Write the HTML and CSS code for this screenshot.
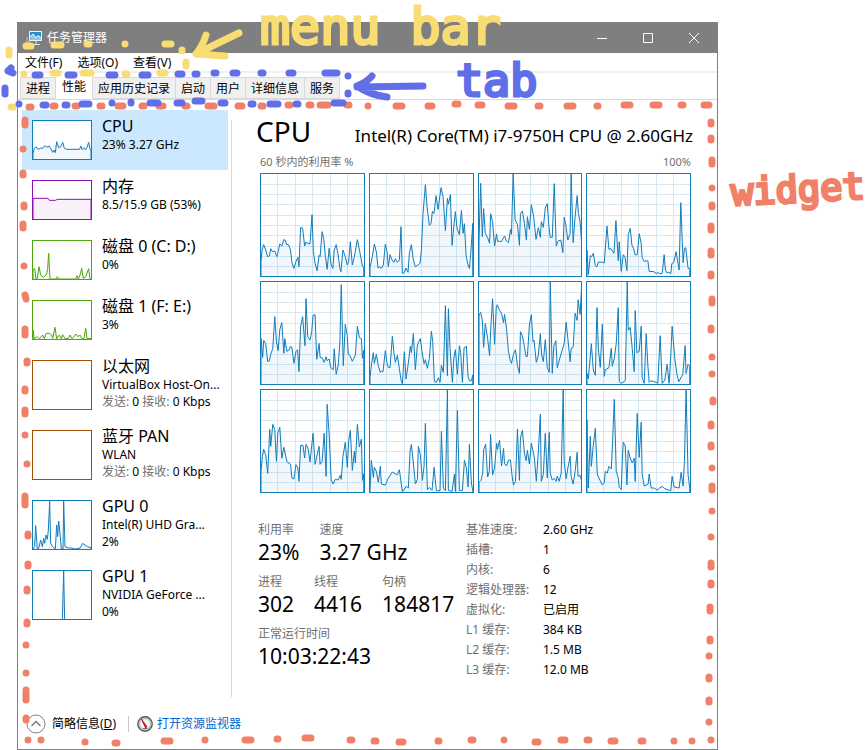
FILE: index.html
```html
<!DOCTYPE html>
<html lang="zh-CN">
<head>
<meta charset="utf-8">
<title>任务管理器</title>
<link rel="stylesheet" href="styles.css">
</head>
<body>
<div class="window">
  <header class="titlebar">
    <svg class="app-icon" viewBox="0 0 16 14"><path d="M1 6v7M3 10v3" stroke="#c8ccd0" stroke-width="1"/><rect x="3.500" y=".5" width="12" height="9" fill="#2a8fc4" stroke="#eef2f4"/><path d="M4.500 6l2.500-3 3 3.500 2-2 3 3V9H4.500z" fill="#8fcbe8"/><path d="M4 6l3-3 3 3.500 2-2 3 2.500" fill="none" stroke="#fff"/><path d="M6 13.500h8M10 10v3" stroke="#e4e7e9"/></svg>
    <span class="title">任务管理器</span>
    <button class="winbtn" aria-label="最小化"><svg viewBox="0 0 10 10"><path d="M0 5.500h10"/></svg></button>
    <button class="winbtn" aria-label="最大化"><svg viewBox="0 0 10 10"><path d="M.5.5h9v9h-9z"/></svg></button>
    <button class="winbtn" aria-label="关闭"><svg viewBox="0 0 10 10"><path d="M0 0l10 10M10 0L0 10"/></svg></button>
  </header>
  <nav class="menubar">
    <button>文件(F)</button><button>选项(O)</button><button>查看(V)</button>
  </nav>
  <div class="tabs" role="tablist">
    <button role="tab">进程</button><button role="tab" aria-selected="true" class="active">性能</button><button role="tab">应用历史记录</button><button role="tab">启动</button><button role="tab">用户</button><button role="tab">详细信息</button><button role="tab">服务</button>
  </div>
  <div class="content">
    <aside class="sidebar">
      <button class="item selected"><svg class="mini cpu" viewBox="99 63 174 114" preserveAspectRatio="none"><path d="M99 160L103 145 108 140 114 148 122 144 128 145 134 137 140 141 148 139 153 147 158 157 162 150 166 158 170 125 176 143 182 140 188 127 193 145 200 148 238 148 243 138 246 149 252 143 257 149 261 142 266 127 270 148 273 150V180H99z"/></svg>
        <span class="info"><span class="name">CPU</span><span>23% 3.27 GHz</span></span></button>
      <button class="item"><svg class="mini memory" viewBox="99 243 174 114" preserveAspectRatio="none"><path d="M99 295H144L148 301H166L172 298H273V360H99z"/></svg>
        <span class="info"><span class="name">内存</span><span>8.5/15.9 GB (53%)</span></span></button>
      <button class="item"><svg class="mini disk" viewBox="99 423 174 114" preserveAspectRatio="none"><path d="M99 510L104 505 108 537 112 535 117 500 122 525 130 532 140 522 143 505 146 460 150 537 168 537 172 530 176 537 227 537 231 527 235 537 240 525 245 505 250 535 257 530 266 506 270 535 273 537V540H99z"/></svg>
        <span class="info"><span class="name">磁盘 0 (C: D:)</span><span>0%</span></span></button>
      <button class="item"><svg class="mini disk" viewBox="99 -57 174 114" preserveAspectRatio="none"><path d="M99 30L103 56 112 50 118 56 128 45 133 56 138 40 148 40 155 45 158 55 165 22 170 56 178 45 184 56 188 44 195 56 205 56 210 45 216 56 228 42 234 50 240 45 246 56 252 55 257 25 261 56 273 56V60H99z"/></svg>
        <span class="info"><span class="name">磁盘 1 (F: E:)</span><span>3%</span></span></button>
      <button class="item"><svg class="mini tall net" viewBox="0 0 58 48"></svg>
        <span class="info"><span class="name">以太网</span><span>VirtualBox Host-On...</span><span><i>发送:</i> 0 <i>接收:</i> 0 Kbps</span></span></button>
      <button class="item"><svg class="mini tall net" viewBox="0 0 58 48"></svg>
        <span class="info"><span class="name">蓝牙 PAN</span><span>WLAN</span><span><i>发送:</i> 0 <i>接收:</i> 0 Kbps</span></span></button>
      <button class="item"><svg class="mini tall cpu" viewBox="99 543 174 144" preserveAspectRatio="none"><path d="M99 687L104 680 107 617 112 687 116 685 122 660 127 680 131 655 134 670 138 645 142 658 145 630 149 543 152 670 158 680 166 687 170 615 173 650 176 603 181 650 184 687 189 687 191 543 195 680 205 684 215 684 225 687 240 684 248 670 255 675 262 680 273 683V690H99z"/></svg>
        <span class="info"><span class="name">GPU 0</span><span>Intel(R) UHD Gra...</span><span>2%</span></span></button>
      <button class="item"><svg class="mini tall cpu" viewBox="99 123 174 144" preserveAspectRatio="none"><path d="M99 269H187L191 123 194 269H273V272H99z"/></svg>
        <span class="info"><span class="name">GPU 1</span><span>NVIDIA GeForce ...</span><span>0%</span></span></button>
    </aside>
    <main class="detail">
      <div class="heading"><h1>CPU</h1><span>Intel(R) Core(TM) i7-9750H CPU @ 2.60GHz</span></div>
      <div class="axis"><span>60 秒内的利用率 %</span><span>100%</span></div>
      <div class="cores">
        <svg viewBox="33 192 306 306" preserveAspectRatio="none"><path d="M33 455L36 420 41 404 47 420 53 440 58 438 62 416 67 425 74 423 80 440 84 425 89 402 95 408 101 389 105 390 109 403 115 404 121 420 125 458 131 475 137 455 143 442 146 470 151 352 157 355 163 408 167 396 173 401 179 401 185 314 189 425 194 460 200 482 206 436 209 440 215 365 220 388 225 440 230 478 236 415 242 465 247 475 251 420 257 404 262 430 268 475 271 485 277 420 284 440 290 465 294 455 299 395 305 465 311 440 320 389 327 425 335 468 339 470V501H33z"/></svg>
        <svg viewBox="358 192 308 306" preserveAspectRatio="none"><path d="M358 473L365 440 371 402 377 425 382 474 387 470 392 475 398 465 404 402 409 425 413 470 418 434 424 450 430 457 434 446 440 457 446 450 451 350 455 490 461 487 466 474 472 487 476 430 482 404 488 450 494 470 503 464 508 460 512 420 517 310 524 224 529 290 536 346 541 340 545 304 550 310 556 257 562 298 571 233 577 260 584 362 590 265 593 282 599 254 604 406 608 360 614 305 619 355 626 374 632 301 637 370 641 341 646 435 651 462 656 475 660 430 666 340V501H358z"/></svg>
        <svg viewBox="24 192 310 306" preserveAspectRatio="none"><path d="M24 390L29 220 34 380 38 296 43 370 50 383 56 400 59 311 65 335 71 408 77 372 80 394 92 394 101 378 107 393 113 398 119 358 122 373 127 192 133 330 140 343 146 406 149 310 155 303 161 340 167 390 170 320 176 358 182 284 189 320 196 388 203 353 209 382 212 335 218 352 224 294 230 281 235 350 239 382 245 382 251 221 257 408 263 393 271 390 277 428 281 322 286 345 292 390 299 370 302 192 308 398 314 320 320 257 324 310 329 335 334 402V501H24z"/></svg>
        <svg viewBox="352 192 309 306" preserveAspectRatio="none"><path d="M352 420L356 493 362 437 366 440 371 430 377 467 382 470 386 456 392 457 398 456 404 459 412 348 418 418 424 416 433 430 439 332 446 452 449 395 455 484 461 434 466 440 472 482 476 374 482 355 487 405 493 417 497 435 503 434 509 371 515 400 518 443 524 454 535 452 539 484 553 485 560 490 566 488 571 491 578 490 584 434 588 480 592 488 598 487 604 491 607 461 613 457 620 425 629 480 634 278 641 458 645 415 649 413 656 475 661 475V501H352z"/></svg>
        <svg viewBox="33 21 306 306" preserveAspectRatio="none"><path d="M33 190L38 247 41 196 47 206 53 260 58 257 62 238 68 220 74 125 79 200 84 227 89 163 95 143 101 235 104 191 110 229 116 225 121 214 125 217 131 265 137 230 142 224 146 290 151 155 157 125 164 212 167 71 172 185 179 195 184 170 188 121 194 119 199 253 206 205 209 247 215 248 221 262 227 245 230 257 236 252 241 278 248 284 251 221 257 298 263 270 268 200 272 29 278 272 284 148 290 182 293 238 298 241 305 259 314 240 320 154 326 188 332 191 335 250 339 226V330H33z"/></svg>
        <svg viewBox="358 21 308 306" preserveAspectRatio="none"><path d="M358 310L362 270 368 233 371 265 377 238 383 272 389 292 392 288 397 290 404 227 409 265 413 278 418 278 425 184 430 235 434 262 440 241 446 280 451 315 455 326 461 230 466 312 472 270 479 213 482 233 488 176 494 284 500 210 503 203 509 191 514 230 520 266 524 254 530 280 536 250 542 169 546 200 551 319 557 322 563 308 568 322 572 271 578 292 584 92 590 302 593 101 598 220 605 322 609 250 614 224 620 298 626 212 630 235 635 322 640 218 647 214 652 305 656 317 662 317 666 300V330H358z"/></svg>
        <svg viewBox="24 21 310 306" preserveAspectRatio="none"><path d="M24 120L29 112 34 135 38 217 43 145 50 190 56 242 60 150 65 71 71 208 76 100 79 89 86 106 92 115 98 143 101 118 107 160 113 230 118 255 122 265 128 238 134 224 140 272 146 295 149 170 155 182 161 215 166 245 170 244 176 150 182 119 187 200 190 196 197 262 203 240 209 176 213 240 218 260 224 194 230 278 236 292 239 21 245 295 250 212 256 197 260 278 265 260 272 235 281 206 287 142 292 190 299 260 302 220 308 217 314 115 320 136 323 74 329 118 334 25V330H24z"/></svg>
        <svg viewBox="352 21 309 306" preserveAspectRatio="none"><path d="M352 295L356 312 365 206 371 285 377 301 382 98 386 220 392 277 398 148 404 304 407 284 418 278 425 220 428 274 434 250 440 205 446 98 449 320 455 325 467 317 473 21 476 166 482 157 488 220 494 290 497 107 502 233 509 229 515 154 518 308 524 325 530 176 535 270 539 322 544 317 560 322 565 325 572 182 578 325 586 315 593 268 599 325 604 240 608 154 616 250 622 295 628 320 640 298 647 212 650 295 656 268 661 274V330H352z"/></svg>
        <svg viewBox="33 346 306 306" preserveAspectRatio="none"><path d="M33 590L37 545 41 524 47 540 53 596 59 464 62 515 68 449 74 465 79 560 83 474 89 458 95 551 101 518 110 560 121 569 125 610 131 613 137 570 143 580 146 620 151 512 158 512 163 550 167 509 173 520 179 562 188 476 194 569 206 515 209 569 215 560 221 476 227 605 230 389 236 480 242 615 248 628 254 614 263 616 269 602 272 614 277 545 284 503 290 578 294 500 299 467 305 587 311 530 314 565 320 449 326 517 332 493 335 617 339 597V655H33z"/></svg>
        <svg viewBox="358 346 308 306" preserveAspectRatio="none"><path d="M358 650L362 557 368 608 371 578 377 590 383 623 389 575 392 628 404 631 413 610 425 592 434 598 440 600 446 585 455 651 467 635 473 640 478 530 482 509 488 565 494 628 500 615 503 515 509 540 515 617 520 575 524 446 530 645 536 638 544 647 550 578 557 648 568 648 572 470 578 640 584 648 590 346 593 647 604 650 611 598 614 650 620 407 626 648 635 647 641 557 647 580 652 637 656 509 662 625 666 648V655H358z"/></svg>
        <svg viewBox="24 346 310 306" preserveAspectRatio="none"><path d="M24 623L30 617 35 595 38 525 44 508 50 607 55 590 59 479 65 601 71 580 77 506 80 524 86 497 92 574 98 521 101 566 107 574 113 556 119 556 124 605 128 631 134 620 140 463 146 617 149 490 155 467 161 535 166 558 170 527 176 568 182 506 191 548 197 620 203 530 209 419 212 620 218 600 224 476 230 610 236 473 239 595 245 616 251 611 257 620 260 604 266 620 272 595 278 346 281 560 287 613 292 580 299 545 302 605 308 628 314 590 320 533 323 605 329 602 334 620V655H24z"/></svg>
        <svg viewBox="352 346 309 306" preserveAspectRatio="none"><path d="M352 435L356 640 362 485 365 575 370 520 377 461 383 598 388 610 398 631 404 625 407 590 413 595 418 575 425 583 429 500 434 374 440 590 446 610 449 638 455 644 458 560 461 503 467 514 472 631 476 527 482 550 488 565 494 551 497 620 503 416 509 548 515 443 518 600 524 634 536 628 539 598 545 640 554 640 563 646 571 640 578 635 586 642 604 648 608 605 614 637 629 640 635 593 641 634 645 560 650 346 656 600 661 640V655H352z"/></svg>
      </div>
      <div class="stats">
        <div class="live">
          <dl><div><dt>利用率</dt><dd>23%</dd></div><div><dt>速度</dt><dd>3.27 GHz</dd></div></dl>
          <dl><div><dt>进程</dt><dd>302</dd></div><div><dt>线程</dt><dd>4416</dd></div><div><dt>句柄</dt><dd>184817</dd></div></dl>
          <dl><div><dt>正常运行时间</dt><dd>10:03:22:43</dd></div></dl>
        </div>
        <table class="specs">
          <tr><th scope="row">基准速度:</th><td>2.60 GHz</td></tr>
          <tr><th scope="row">插槽:</th><td>1</td></tr>
          <tr><th scope="row">内核:</th><td>6</td></tr>
          <tr><th scope="row">逻辑处理器:</th><td>12</td></tr>
          <tr><th scope="row">虚拟化:</th><td>已启用</td></tr>
          <tr><th scope="row">L1 缓存:</th><td>384 KB</td></tr>
          <tr><th scope="row">L2 缓存:</th><td>1.5 MB</td></tr>
          <tr><th scope="row">L3 缓存:</th><td>12.0 MB</td></tr>
        </table>
      </div>
    </main>
  </div>
  <footer class="footer">
    <button class="fewer"><svg viewBox="0 0 20 20"><circle cx="10" cy="10" r="9" fill="none" stroke="#808080"/><path d="M5.500 12L10 7.500l4.500 4.500" fill="none" stroke="#777" stroke-width="1.300"/></svg><span>简略信息(<u>D</u>)</span></button>
    <span class="sep"></span>
    <a href="#"><svg viewBox="0 0 16 16"><circle cx="8" cy="8" r="7.200" fill="#f4f4f4" stroke="#555" stroke-width="1.400"/><circle cx="8" cy="8" r="5.500" fill="none" stroke="#aaa"/><path d="M4.500 3l5.500 8-1.500.8z" fill="#d22020" stroke="#c01818"/><path d="M6 12.500h4.500" stroke="#777"/></svg>打开资源监视器</a>
  </footer>
</div>

<div class="notes">
  <svg width="868" height="750" viewBox="0 0 868 750">
    <path class="ink yellow dot" d="M26 46h5M54 45h7M87 44h2M125 44h0M165 44h6M182 50v1M9 50v5M186 62v4M24 74h0M53 73h5M83 73h8M125 74h2M160 73h5M11 107h2"/>
    <path class="ink orange dot" d="M29 107h2M53 106h2M75 106h2M100 106h2M118 106h5M142 106h2M159 106h4M185 106h2M208 106h6M238 106h4M261 106h2M288 105h2M309 105h2M320 105h8M347 105h2M368 106h0M396 106h6M428 106h4M455 104h3M478 105h4M508 106h6M538 106h2M567 106h6M597 106h1M624 105h6M653 105h6M681 105h2M704 105h5M25 120v5M23 149h0M23 173v2M24 205v2M23 224v4M24 266h0M25 295l1 4M25 329v6M27 361v2M25 389v2M25 410v4M25 435h0M27 464h0M25 496v9M28 534v2M28 564v2M27 589v2M27 622v2M26 645h0M26 673h0M26 690v10M26 718v2M28 740h0M41 740h0M85 742h0M115 743h2M164 741h6M205 740h0M245 740h6M277 739h1M305 738h6M350 740h2M374 741h2M399 742h4M438 741h1M471 740h2M504 740h0M535 742h3M561 740h4M587 740h2M611 741h4M641 741h2M674 741h0M692 741h0M711 740h0M711 122v2M711 138v2M712 160v4M712 188h0M712 205v2M711 226v4M711 251v4M711 274v2M712 299v4M711 328v2M712 357h0M712 374h0M713 400v2M711 424v2M711 445v2M712 468h0M712 486v4M712 511h0M711 537h0M711 563v4M711 583v2M710 607v4M710 639v2M709 656h0M709 677v2M709 700v2M709 722h0"/>
    <path class="ink blue dot" d="M11 68l-3 3 5 2M5 88v6M35 75h5M68 75h6M109 75h6M142 75h6M178 74h4M195 74h2M214 73h2M233 73h4M261 73h2M289 73h4M325 73h12M348 76h0M348 93v1M19 104h0M43 105h3M65 105h2M82 104h7M112 103h0M131 102v1M150 103h8M177 103h5M195 101h7M221 103h4M251 104h2M270 104h8M296 104h2M334 103h9"/>
    <path class="ink yellow arrow" d="M239 33Q216 44 196 54M206 35Q203 45 196 54L225 56"/>
    <path class="ink blue arrow" d="M423 86L357 87M372 76Q367 82 357 86 370 95 387 97"/>
  </svg>
  <span class="word menu-word">menu bar</span>
  <span class="word tab-word">tab</span>
  <span class="word widget-word">widget</span>
</div>
</body>
</html>
```
FILE: styles.css
```css
* { box-sizing: border-box; }
body {
  margin: 0;
  min-height: 100vh;
  padding: 22px 150px 0 17px;
  display: flex;
  background: #fff;
  color: #000;
  font: 12px/16px "Noto Sans", "Noto Sans CJK SC", sans-serif;
}
button {
  font: inherit;
  color: inherit;
  background: none;
  border: 0;
  padding: 0;
  text-align: left;
}
svg { display: block; flex: none; }

.window {
  flex: 1;
  min-width: 0;
  display: flex;
  flex-direction: column;
  border: 1px solid #7f7f7f;
}
.titlebar {
  display: flex;
  align-items: center;
  height: 30px;
  padding-left: 8px;
  background: #7f7f7f;
  color: #fff;
}
.app-icon { width: 16px; height: 14px; }
.title { flex: 1; padding-left: 5px; }
.winbtn { width: 46px; height: 30px; display: grid; place-items: center; }
.winbtn svg { width: 10px; height: 10px; fill: none; stroke: #fff; }

.menubar {
  display: flex;
  gap: 15px;
  height: 20px;
  padding: 2px 0 0 7px;
  border-bottom: 2px solid #f0f0f0;
}
.tabs {
  display: flex;
  align-items: flex-end;
  height: 27px;
  padding-left: 2px;
  border-bottom: 1px solid #d9d9d9;
}
.tabs button {
  height: 22px;
  padding: 2px 5px 0;
  background: #f0f0f0;
  border: 1px solid #d9d9d9;
  border-left-width: 0;
}
.tabs button:first-child { border-left-width: 1px; }
.tabs .active { height: 25px; padding: 0 6px; background: #fff; border-color: #fff #d9d9d9 #fff #fff; }

.content { flex: 1; display: flex; padding: 10px 24px 0 4px; }
.sidebar { width: 206px; flex: none; }
.item { display: flex; gap: 10px; width: 100%; height: 60px; padding-left: 10px; }
.item:has(.tall) { height: 70px; }
.item.selected { background: #cce8ff; }
.mini { width: 60px; height: 40px; margin-top: 10px; border: 1px solid; background: #fff; }
.mini.tall { height: 50px; }
.mini path, .cores path {
  stroke: currentColor;
  stroke-width: 1px;
  vector-effect: non-scaling-stroke;
  fill: currentColor;
  fill-opacity: 0.06;
}
.cpu { color: #117dbb; }
.memory { color: #8b12ae; }
.disk { color: #4da60c; }
.net { color: #a74f01; }
.info { padding-top: 6px; white-space: nowrap; }
.info > span { display: block; line-height: 17px; }
.info > .name { font-size: 16px; line-height: 20px; }
.info i { font-style: normal; color: #707070; }

.detail {
  flex: 1;
  min-width: 0;
  margin: 10px 0 0 3px;
  padding-left: 24px;
  border-left: 1px solid #d9d9d9;
}
.heading { display: flex; justify-content: space-between; align-items: baseline; height: 34px; margin-top: -6px; white-space: nowrap; }
.heading h1 { margin: 0; font-size: 28px; font-weight: 400; line-height: 34px; }
.heading span { font-size: 17px; }
.axis { display: flex; justify-content: space-between; padding: 6px 2px 3px 4px; font-size: 11px; color: #707070; }
.cores { display: grid; grid-template-columns: repeat(4, 1fr); gap: 4px; padding: 0 2px 0 4px; }
.cores svg {
  width: 100%;
  height: 104px;
  border: 1px solid #117dbb;
  color: #117dbb;
  background: url("data:image/svg+xml,%3Csvg xmlns='http://www.w3.org/2000/svg' width='102' height='102'%3E%3Cpath d='M16.5 0v102M34.5 0v102M51.5 0v102M69.5 0v102M86.5 0v102M0 10.5h102M0 20.5h102M0 30.5h102M0 41.5h102M0 51.5h102M0 61.5h102M0 72.5h102M0 82.5h102M0 92.5h102' stroke='%23d7e8f3'/%3E%3C/svg%3E");
}
.stats { display: flex; padding: 27px 0 0 2px; }
.live { width: 208px; flex: none; }
.live dl { display: flex; gap: 20px; margin: 0 0 8px; }
.live dt, .specs th { color: #707070; }
.live dt { line-height: 20px; }
.live dd { margin: 0; font-size: 21px; line-height: 24px; white-space: nowrap; }
.specs { border-collapse: collapse; height: 160px; }
.specs th, .specs td { height: 20px; padding: 0; font-weight: 400; text-align: left; white-space: nowrap; }
.specs th { min-width: 77px; }

.footer { display: flex; align-items: center; height: 52px; padding: 2px 0 0 8px; }
.fewer { display: flex; align-items: center; gap: 6px; }
.fewer svg { width: 20px; height: 20px; }
.sep { width: 1px; height: 16px; margin: 0 8px 0 12px; background: #c8c8c8; }
.footer a { display: flex; align-items: center; gap: 4px; color: #0066cc; text-decoration: none; }
.footer a svg { width: 16px; height: 16px; }

.notes { position: absolute; top: 0; left: 0; pointer-events: none; }
.ink { fill: none; stroke-linecap: round; stroke-linejoin: round; }
.dot { stroke-width: 7px; }
.arrow { stroke-width: 7px; }
.yellow { stroke: #f8dc74; }
.orange { stroke: #f08068; }
.blue { stroke: #606ee8; }
.word {
  position: absolute;
  font-family: "DejaVu Sans Mono", monospace;
  line-height: 1;
  white-space: nowrap;
  -webkit-text-stroke: 3px currentColor;
  stroke-linejoin: round;
}
.menu-word { left: 260px; top: 2px; font-size: 50px; color: #f8dc74; }
.tab-word { left: 456px; top: 58px; font-size: 45px; color: #606ee8; }
.widget-word { left: 731px; top: 171px; font-size: 37px; color: #f08068; transform: rotate(-3deg); }
```
